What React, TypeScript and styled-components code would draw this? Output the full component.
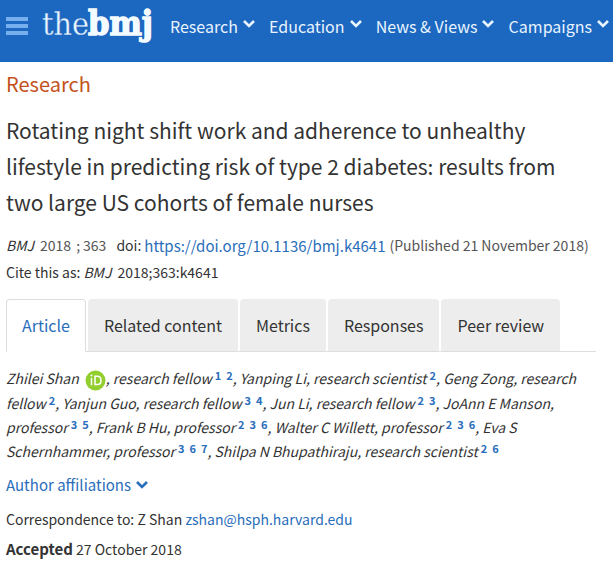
import React, { Fragment, useState } from 'react';
import styled, { createGlobalStyle } from 'styled-components';

const link = '#2a6ebb';
const ink = '#333333';

const Global = createGlobalStyle`
  *, *::before, *::after { box-sizing: border-box; }
  body {
    margin: 0;
    background: #ffffff;
    color: ${ink};
    font-family: "Noto Sans CJK JP", Roboto, sans-serif;
  }
  a { color: ${link}; text-decoration: none; }
  button { font: inherit; cursor: pointer; }
`;

const Header = styled.header`
  display: flex;
  align-items: flex-start;
  height: 62px;
  padding: 0 4px 0 6px;
  overflow: hidden;
  background: #1c67bf;
`;

const MenuButton = styled.button`
  display: flex;
  flex-direction: column;
  gap: 3px;
  flex: none;
  width: 22px;
  margin-top: 17px;
  padding: 0;
  border: 0;
  background: none;
`;

const MenuBar = styled.span`
  display: block;
  width: 100%;
  height: 4px;
  background: #76aeee;
`;

const LogoLink = styled.a`
  display: block;
  flex: none;
  margin: 4px 17px 0 14px;
`;

const Nav = styled.nav`
  display: flex;
  flex: 1;
  justify-content: space-between;
  margin-top: 16px;
`;

const NavItem = styled.button`
  display: flex;
  gap: 5px;
  padding: 0;
  border: 0;
  background: none;
  color: #e8f4ff;
  font-size: 16px;
  line-height: 20px;
  white-space: nowrap;
`;

const NavChevron = styled.svg`
  flex: none;
  margin-top: 3px;
`;

const Main = styled.main`
  padding: 10px 17px 8px 6px;
`;

const Section = styled.p`
  margin: 0 0 16px;
  color: #c4511b;
  font-size: 20px;
  line-height: 24px;
`;

const Title = styled.h1`
  margin: 0 0 12px;
  font-size: 21px;
  font-weight: 400;
  line-height: 36px;
`;

const Meta = styled.p`
  display: flex;
  flex-wrap: wrap;
  margin: 0;
  font-size: 14px;
  line-height: 27px;
`;

const Part = styled.span<{ $gap: number; $soft?: boolean }>`
  margin-right: ${(p) => p.$gap}px;
  color: ${(p) => (p.$soft ? '#555555' : 'inherit')};
`;

const Journal = styled.cite`
  margin-right: 6px;
`;

const Doi = styled.a`
  margin-right: 4px;
  font-size: 15px;
`;

const Published = styled.span`
  color: #555555;
`;

const Tabs = styled.div`
  display: flex;
  gap: 2px;
  margin-top: 13px;
  border-bottom: 1px solid #dddddd;
`;

const Tab = styled.button<{ $active: boolean }>`
  height: 53px;
  margin-bottom: -1px;
  padding: 0 15px 2px;
  border: 1px solid ${(p) => (p.$active ? '#dddddd' : '#ededed')};
  border-bottom-color: ${(p) => (p.$active ? '#ffffff' : '#dddddd')};
  border-radius: 4px 4px 0 0;
  background: ${(p) => (p.$active ? '#ffffff' : '#ededed')};
  color: ${(p) => (p.$active ? link : ink)};
  font-size: 16px;
  white-space: nowrap;
`;

const Authors = styled.p`
  margin: 14px 0 12px;
  font-size: 14px;
  font-style: italic;
  line-height: 24px;
`;

const Refs = styled.sup`
  margin-left: 3px;
  font-size: 11px;
  font-style: normal;
  font-weight: 700;
  line-height: 12px;
  vertical-align: 4px;
`;

const RefLink = styled.a`
  & + & {
    margin-left: 5px;
  }
`;

const OrcidIcon = styled.svg`
  margin-left: 6px;
  vertical-align: -7px;
`;

const Affiliations = styled.button`
  display: flex;
  align-items: center;
  gap: 5px;
  padding: 0;
  border: 0;
  background: none;
  color: ${link};
  font-size: 15px;
  line-height: 20px;
`;

const Line = styled.p<{ $top: number }>`
  margin: ${(p) => p.$top}px 0 0;
  font-size: 14px;
  line-height: 20px;
`;

const Accepted = styled.strong`
  font-size: 15px;
`;

function Logo() {
  return (
    <svg width="111" height="42" viewBox="0 0 111 42" role="img" aria-label="thebmj">
      <text x="0" y="31" fill="#e8f6ff" stroke="#1c67bf" strokeWidth="0.3" fontFamily="DejaVu Serif Condensed, DejaVu Serif" fontStretch="condensed" fontSize="32">the</text>
      <text x="46" y="31" fill="#f4fbff" stroke="#f4fbff" strokeWidth="1.4" fontFamily="DejaVu Serif Condensed, DejaVu Serif" fontStretch="condensed" fontWeight="700" fontSize="34">bmj</text>
    </svg>
  );
}

function ChevronMark() {
  return <path d="M1 2 L6 7 L11 2" fill="none" stroke="currentColor" strokeWidth="2.6" />;
}

function Orcid() {
  return (
    <OrcidIcon width="21" height="21" viewBox="0 0 21 21" role="img" aria-label="ORCID">
      <circle cx="10.5" cy="10.5" r="10" fill="#93ce2f" />
      <path d="M6.5 8v7.2M10 6.3v8.2h2.1q3.9 0 3.9-4.1t-3.9-4.1z" fill="none" stroke="#fff" strokeWidth="1.5" />
      <circle cx="6.5" cy="5.4" r="1" fill="#fff" />
    </OrcidIcon>
  );
}

const navItems = ['Research', 'Education', 'News & Views', 'Campaigns'];
const tabs = ['Article', 'Related content', 'Metrics', 'Responses', 'Peer review'];

const authors = [
  { name: 'Zhilei Shan', role: 'research fellow', refs: [1, 2], orcid: true },
  { name: 'Yanping Li', role: 'research scientist', refs: [2] },
  { name: 'Geng Zong', role: 'research fellow', refs: [2] },
  { name: 'Yanjun Guo', role: 'research fellow', refs: [3, 4] },
  { name: 'Jun Li', role: 'research fellow', refs: [2, 3] },
  { name: 'JoAnn E Manson', role: 'professor', refs: [3, 5] },
  { name: 'Frank B Hu', role: 'professor', refs: [2, 3, 6] },
  { name: 'Walter C Willett', role: 'professor', refs: [2, 3, 6] },
  { name: 'Eva S Schernhammer', role: 'professor', refs: [3, 6, 7] },
  { name: 'Shilpa N Bhupathiraju', role: 'research scientist', refs: [2, 6] },
];

export default function App() {
  const [active, setActive] = useState(tabs[0]);
  return (
    <>
      <Global />
      <Header>
        <MenuButton aria-label="Menu">
          <MenuBar />
          <MenuBar />
          <MenuBar />
        </MenuButton>
        <LogoLink href="#home"><Logo /></LogoLink>
        <Nav>
          {navItems.map((item) => (
            <NavItem key={item}>
              {item}
              <NavChevron width="12" height="10" viewBox="0 0 12 10" aria-hidden="true"><ChevronMark /></NavChevron>
            </NavItem>
          ))}
        </Nav>
      </Header>
      <Main>
        <Section>Research</Section>
        <Title>
          Rotating night shift work and adherence to unhealthy lifestyle in predicting risk of type 2
          diabetes: results from two large US cohorts of female nurses
        </Title>
        <Meta>
          <Journal>BMJ</Journal>
          <Part $gap={5} $soft>2018</Part>
          <Part $gap={3} $soft>;</Part>
          <Part $gap={10} $soft>363</Part>
          <Part $gap={3}>doi:</Part>
          <Doi href="https://doi.org/10.1136/bmj.k4641">https://doi.org/10.1136/bmj.k4641</Doi>
          <Published>(Published 21 November 2018)</Published>
        </Meta>
        <Meta>
          <Part $gap={3}>Cite this as:</Part>
          <Journal>BMJ</Journal>
          <span>2018;363:k4641</span>
        </Meta>
        <Tabs role="tablist">
          {tabs.map((tab) => (
            <Tab key={tab} role="tab" aria-selected={tab === active} $active={tab === active} onClick={() => setActive(tab)}>
              {tab}
            </Tab>
          ))}
        </Tabs>
        <Authors>
          {authors.map((a, i) => (
            <Fragment key={a.name}>
              {i > 0 && ', '}
              {a.name}
              {a.orcid && <Orcid />}, {a.role}
              <Refs>
                {a.refs.map((r) => (
                  <RefLink key={r} href={`#aff-${r}`}>{r}</RefLink>
                ))}
              </Refs>
            </Fragment>
          ))}
        </Authors>
        <Affiliations>
          Author affiliations
          <svg width="12" height="10" viewBox="0 0 12 10" aria-hidden="true"><ChevronMark /></svg>
        </Affiliations>
        <Line $top={14}>
          Correspondence to: Z Shan <a href="mailto:zshan@hsph.harvard.edu">zshan@hsph.harvard.edu</a>
        </Line>
        <Line $top={10}>
          <Accepted>Accepted</Accepted> 27 October 2018
        </Line>
      </Main>
    </>
  );
}
